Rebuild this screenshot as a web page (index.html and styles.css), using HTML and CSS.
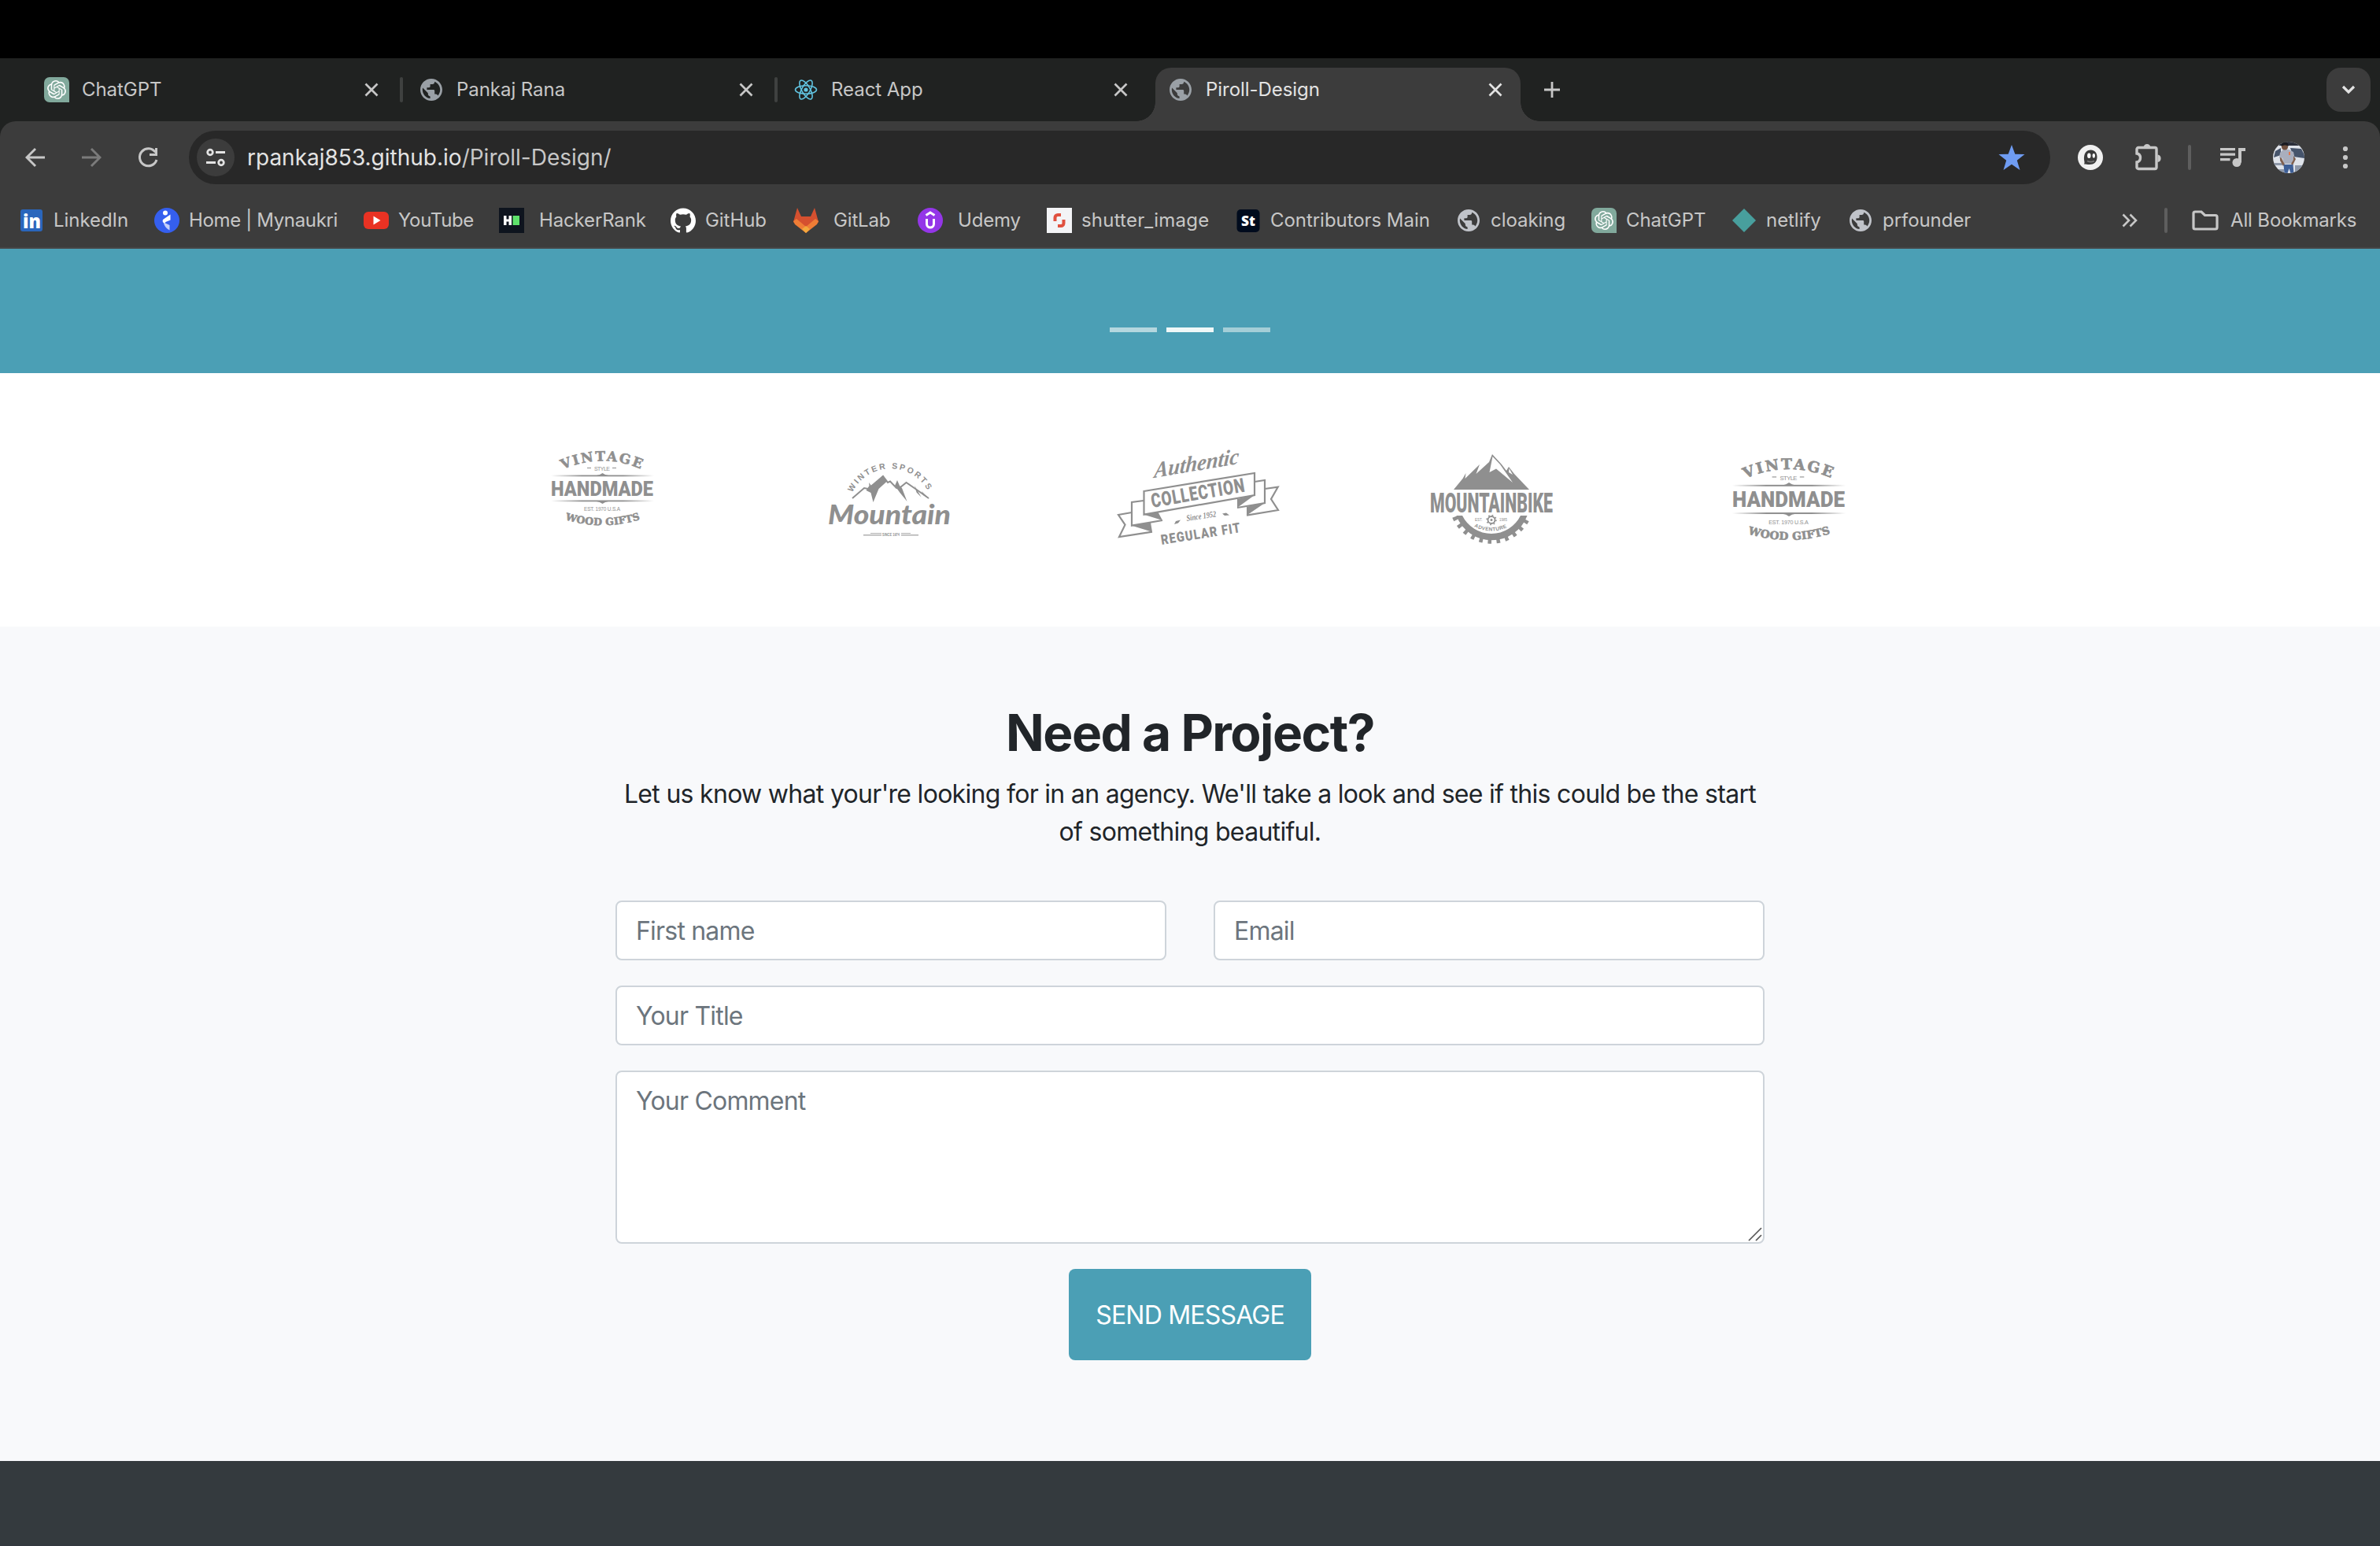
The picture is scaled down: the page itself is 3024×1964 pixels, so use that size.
FILE: index.html
```html
<!DOCTYPE html>
<html lang="en">
<head>
<meta charset="utf-8">
<title>Piroll-Design</title>
<link rel="stylesheet" href="styles.css">
</head>
<body>
<svg class="defs" aria-hidden="true">
  <symbol id="globe" viewBox="2 2 20 20"><path fill="currentColor" d="M12 2C6.480 2 2 6.480 2 12s4.480 10 10 10 10-4.480 10-10S17.520 2 12 2zm-1 17.930c-3.950-.490-7-3.850-7-7.930 0-.620.080-1.210.210-1.790L9 15v1c0 1.100.900 2 2 2v1.930zm6.900-2.540c-.260-.810-1-1.390-1.900-1.390h-1v-3c0-.550-.450-1-1-1H8v-2h2c.550 0 1-.450 1-1V7h2c1.100 0 2-.900 2-2v-.410c2.930 1.190 5 4.060 5 7.410 0 2.080-.800 3.970-2.100 5.390z"/></symbol>
  <symbol id="close" viewBox="0 0 20 20"><path d="M2.500 2.500l15 15M17.500 2.500l-15 15" fill="none" stroke="currentColor" stroke-width="2.700"/></symbol>
  <symbol id="openai" viewBox="0 0 32 32">
    <path fill="#81a99c" d="M7 0h18a7 7 0 0 1 7 7v25H7a7 7 0 0 1-7-7V7a7 7 0 0 1 7-7z"/>
    <path fill="#fff" transform="translate(4 4)" d="M22.2819 9.8211a5.9847 5.9847 0 0 0-.5157-4.9108 6.0462 6.0462 0 0 0-6.5098-2.9A6.0651 6.0651 0 0 0 4.9807 4.1818a5.9847 5.9847 0 0 0-3.9977 2.9 6.0462 6.0462 0 0 0 .7427 7.0966 5.98 5.98 0 0 0 .511 4.9107 6.051 6.051 0 0 0 6.5146 2.9001A5.9847 5.9847 0 0 0 13.2599 24a6.0557 6.0557 0 0 0 5.7718-4.2058 5.9894 5.9894 0 0 0 3.9977-2.9001 6.0557 6.0557 0 0 0-.7475-7.0729zm-9.022 12.6081a4.4755 4.4755 0 0 1-2.8764-1.0408l.1419-.0804 4.7783-2.7582a.7948.7948 0 0 0 .3927-.6813v-6.7369l2.02 1.1686a.071.071 0 0 1 .038.052v5.5826a4.504 4.504 0 0 1-4.4945 4.4944zm-9.6607-4.1254a4.4708 4.4708 0 0 1-.5346-3.0137l.142.0852 4.783 2.7582a.7712.7712 0 0 0 .7806 0l5.8428-3.3685v2.3324a.0804.0804 0 0 1-.0332.0615L9.74 19.9502a4.4992 4.4992 0 0 1-6.1408-1.6464zM2.3408 7.8956a4.485 4.485 0 0 1 2.3655-1.9728V11.6a.7664.7664 0 0 0 .3879.6765l5.8144 3.3543-2.0201 1.1685a.0757.0757 0 0 1-.071 0l-4.8303-2.7865A4.504 4.504 0 0 1 2.3408 7.872zm16.5963 3.8558L13.1038 8.364 15.1192 7.2a.0757.0757 0 0 1 .071 0l4.8303 2.7913a4.4944 4.4944 0 0 1-.6765 8.1042v-5.6772a.79.79 0 0 0-.407-.667zm2.0107-3.0231l-.142-.0852-4.7735-2.7818a.7759.7759 0 0 0-.7854 0L9.409 9.2297V6.8974a.0662.0662 0 0 1 .0284-.0615l4.8303-2.7866a4.4992 4.4992 0 0 1 6.6802 4.66zM8.3065 12.863l-2.02-1.1638a.0804.0804 0 0 1-.038-.0567V6.0742a4.4992 4.4992 0 0 1 7.3757-3.4537l-.142.0805L8.704 5.459a.7948.7948 0 0 0-.3927.6813zm1.0976-2.3654l2.602-1.4998 2.6069 1.4998v2.9994l-2.5974 1.4997-2.6067-1.4997Z"/>
  </symbol>
  <linearGradient id="rule"><stop offset="0" stop-color="#8f8f8f" stop-opacity="0"/><stop offset=".3" stop-color="#8f8f8f"/><stop offset=".7" stop-color="#8f8f8f"/><stop offset="1" stop-color="#8f8f8f" stop-opacity="0"/></linearGradient>
  <path id="arc-vintage" d="M715 596.500A121 121 0 0 1 816 596.500"/>
  <path id="arc-wood" d="M718 660Q765 674.500 813 660"/>
  <symbol id="vintage" viewBox="690 560 150 140" overflow="visible">
    <g fill="#8f8f8f">
      <text class="slab heavy-line" font-size="17" textLength="102" lengthAdjust="spacing"><textPath href="#arc-vintage">VINTAGE</textPath></text>
      <text class="thin" x="755" y="598" font-size="7" textLength="20">STYLE</text>
      <rect x="746" y="594" width="5" height="1"/><rect x="778" y="594" width="5" height="1"/>
      <rect x="700" y="603.500" width="131" height="1.800" fill="url(#rule)"/>
      <rect x="700" y="635.500" width="131" height="1.800" fill="url(#rule)"/>
      <path d="M758 604l4-1 3.500-2 3.500 2 4 1zM758 637l4 1 3.500 2 3.500-2 4-1z"/>
      <text class="heavy" x="700" y="629.500" font-size="25" textLength="130" lengthAdjust="spacingAndGlyphs">HANDMADE</text>
      <text class="thin" x="742" y="649" font-size="6.500" textLength="46">EST. 1970 U.S.A</text>
      <text class="slab heavy-line" font-size="12.500" textLength="97" lengthAdjust="spacing"><textPath href="#arc-wood">WOOD GIFTS</textPath></text>
    </g>
  </symbol>
</svg>

<header class="browser">
  <div class="menubar"></div>
  <nav class="tabs">
    <div class="tab"><span class="slot"><svg width="32" height="32"><use href="#openai"/></svg></span><span class="title">ChatGPT</span><svg class="x" width="20" height="20"><use href="#close"/></svg><i class="sep"></i></div>
    <div class="tab"><span class="slot"><svg class="globe" width="28" height="28"><use href="#globe"/></svg></span><span class="title">Pankaj Rana</span><svg class="x" width="20" height="20"><use href="#close"/></svg><i class="sep"></i></div>
    <div class="tab"><span class="slot"><svg width="30" height="30" viewBox="-15 -15 30 30"><g fill="none" stroke="#61c3e0" stroke-width="1.600"><ellipse rx="13.500" ry="5.200"/><ellipse rx="13.500" ry="5.200" transform="rotate(60)"/><ellipse rx="13.500" ry="5.200" transform="rotate(120)"/></g><circle r="2.600" fill="#61c3e0"/></svg></span><span class="title">React App</span><svg class="x" width="20" height="20"><use href="#close"/></svg></div>
    <div class="tab active"><span class="slot"><svg class="globe" width="28" height="28"><use href="#globe"/></svg></span><span class="title">Piroll-Design</span><svg class="x" width="20" height="20"><use href="#close"/></svg></div>
    <svg class="plus" width="22" height="22" viewBox="0 0 22 22"><path d="M11 1v20M1 11h20" stroke="currentColor" stroke-width="2.800"/></svg>
    <span class="tab-search"><svg width="20" height="14" viewBox="0 0 20 14"><path d="M3 3l7 7 7-7" fill="none" stroke="#e3e3e3" stroke-width="3.200"/></svg></span>
  </nav>

  <div class="toolbar">
    <svg class="back" width="26" height="26" viewBox="0 0 26 26"><path d="M25 13H3M13 2L2 13l11 11" fill="none" stroke="#c7c7c7" stroke-width="2.900"/></svg>
    <svg class="forward" width="26" height="26" viewBox="0 0 26 26"><path d="M1 13h22M13 2l11 11-11 11" fill="none" stroke="#7b7b7b" stroke-width="2.900"/></svg>
    <svg class="reload" width="28" height="28" viewBox="0 0 28 28"><path d="M23.500 7.500A11 11 0 1 0 25 17" fill="none" stroke="#c7c7c7" stroke-width="3"/><path d="M26 2v10H16v-3h7V2z" fill="#c7c7c7"/></svg>
    <div class="omnibox">
      <span class="site-info"><svg width="26" height="24" viewBox="0 0 26 24"><g fill="none" stroke="#e3e3e3" stroke-width="2.800"><circle cx="6" cy="5.500" r="3.300"/><path d="M13 5.500h12M1 18.500h12"/><circle cx="20" cy="18.500" r="3.300"/></g></svg></span>
      <span class="url">rpankaj853.github.io<span class="path">/Piroll-Design/</span></span>
      <svg class="star" width="34" height="32" viewBox="0 0 34 32"><path fill="#6f9cf2" d="M17 0l4.300 11.700L33.500 12l-9.700 7.700L27.500 32 17 24.800 6.500 32l3.700-12.300L.5 12l12.200-.3z"/></svg>
    </div>
    <svg class="ext" width="32" height="32" viewBox="0 0 32 32"><circle cx="16" cy="16" r="16" fill="#f0f0f0"/><path d="M8 24.500c1.500-2.500-.5-4.500 0-9C8.600 9.500 12 6.500 16.500 6.500c5 0 8 3.500 8 9 0 6.500-4 9.500-9.500 9.500-3 0-5-.5-7-.5z" fill="#3a3a3a"/><path d="M12 20.500c3 1.500 6 1.500 9 0" fill="none" stroke="#777" stroke-width="1.500"/><ellipse cx="14.300" cy="13.800" rx="2.200" ry="3.200" fill="#fff"/><ellipse cx="20.300" cy="13.800" rx="1.700" ry="2.900" fill="#fff"/></svg>
    <svg class="puzzle" width="34" height="34" viewBox="0 0 34 34"><path d="M3.500 7.500a2 2 0 0 1 2-2h21a2 2 0 0 1 2 2v23a2 2 0 0 1-2 2h-21a2 2 0 0 1-2-2v-6.500c6-1 6-10 0-11z" transform="translate(-1.500 -1)" fill="none" stroke="#c7c7c7" stroke-width="3.400"/><path d="M10.500 4.500a4.500 4.500 0 0 1 9 0zM28.500 13.500a4.800 4.800 0 0 1 0 9.500z" fill="#c7c7c7"/></svg>
    <i class="divider"></i>
    <svg class="music" width="32" height="26" viewBox="0 0 32 26"><path fill="#c7c7c7" d="M0 1h19v3.200H0zM0 7.500h19v3.200H0zM0 14h12.500v3.200H0zM23 1h9v4h-5v14.500h-4z"/><circle cx="21" cy="19.500" r="5.500" fill="#c7c7c7"/></svg>
    <svg class="avatar" width="40" height="40" viewBox="0 0 40 40"><defs><clipPath id="round"><circle cx="20" cy="20" r="20"/></clipPath></defs><g clip-path="url(#round)"><path fill="#dfe3ea" d="M0 0h40v40H0z"/><path fill="#2b2f3a" d="M8 0h30v5H8z"/><path fill="#46546b" d="M22 8l14 1 4 8v4l-14-2zM3 12l7-4v9l-9 3z"/><path fill="#8d97a8" d="M0 27h12v3H0zM28 30h12v10H28zM0 35h14v5H0z"/><path fill="#a9aebd" d="M9 14l4-4h7l6 3 2 9-3 6H14l-2-8-2 4-2-4z"/><path fill="#80604f" d="M9 20l2 1 4 8-2 2-4-7zM26 18l3 4-4 8-2-2 3-5z"/><circle cx="15" cy="6.500" r="4" fill="#70503f"/><path fill="#191a20" d="M10.500 6c0-8 10-8 9 0-2-2-6-2-9 0z"/><path fill="#e2774d" d="M20 13h2v4h-2z"/><path fill="#3e5f96" d="M13.500 29h12l1 11h-4l-2-6-2 6h-4z"/></g></svg>
    <svg class="dots" width="8" height="30" viewBox="0 0 8 30" fill="#c7c7c7"><circle cx="4" cy="4" r="3.100"/><circle cx="4" cy="15" r="3.100"/><circle cx="4" cy="26" r="3.100"/></svg>
  </div>

  <div class="bookmarks">
    <div class="mark"><svg width="32" height="32"><rect x="2" y="2" width="28" height="28" rx="3" fill="#2a66bc"/><text class="glyph" x="5" y="26" font-size="25" textLength="23" lengthAdjust="spacingAndGlyphs">in</text></svg><span>LinkedIn</span></div>
    <div class="mark tight"><svg width="32" height="32"><circle cx="16" cy="16" r="16" fill="#355fee"/><circle cx="14" cy="6.500" r="3" fill="#fff"/><path d="M11 15l9.500-6.500v7L14.500 18l-1.500 2c-2-1-3-3-2-5z" fill="#fff"/><path d="M12 18.500l7.500 3.500v6.500C15 26 12 22 12 18.500z" fill="#c3d0fb"/></svg><span>Home | Mynaukri</span></div>
    <div class="mark tight"><svg width="32" height="32"><rect y="5" width="32" height="22" rx="6" fill="#e93223"/><path d="M12.500 10.500l9 5.500-9 5.500z" fill="#fff"/></svg><span>YouTube</span></div>
    <div class="mark wide"><svg width="32" height="32"><path fill="#0e141e" d="M0 0h32v32H0z"/><path fill="#fff" d="M6 10h3.500v4.500h3V10H16v12h-3.500v-4.500h-3V22H6z"/><path fill="#5ee26b" d="M17.500 10H26v12h-8.500z"/></svg><span>HackerRank</span></div>
    <div class="mark"><svg width="32" height="32" viewBox="0 0 24 24"><path fill="#fff" d="M12 .297c-6.63 0-12 5.373-12 12 0 5.303 3.438 9.800 8.205 11.385.6.113.82-.258.82-.577 0-.285-.01-1.04-.015-2.04-3.338.724-4.042-1.61-4.042-1.61C4.422 18.070 3.633 17.700 3.633 17.700c-1.087-.744.084-.729.084-.729 1.205.084 1.838 1.236 1.838 1.236 1.070 1.835 2.809 1.305 3.495.998.108-.776.417-1.305.76-1.605-2.665-.3-5.466-1.332-5.466-5.930 0-1.310.465-2.380 1.235-3.220-.135-.303-.54-1.523.105-3.176 0 0 1.005-.322 3.300 1.230.96-.267 1.980-.399 3-.405 1.020.006 2.040.138 3 .405 2.280-1.552 3.285-1.230 3.285-1.230.645 1.653.24 2.873.12 3.176.765.840 1.230 1.910 1.230 3.220 0 4.610-2.805 5.625-5.475 5.920.42.360.81 1.096.81 2.220 0 1.606-.015 2.896-.015 3.286 0 .315.21.690.825.570C20.565 22.092 24 17.592 24 12.297c0-6.627-5.373-12-12-12"/></svg><span>GitHub</span></div>
    <div class="mark wide"><svg width="32" height="32"><path fill="#d5502f" d="M5 0l5 11h12l5-11 5 18-16 13.500L0 18z"/><path fill="#ef7d36" d="M0 17l4-3 12 10 12-10 4 3-2 4-14 11L2 21z"/><path fill="#f2a83d" d="M16 23l5 4-5 5-5-5z"/></svg><span>GitLab</span></div>
    <div class="mark wide"><svg width="32" height="32"><circle cx="16" cy="16" r="16" fill="#9436e8"/><path d="M10.500 9.500L16 6l5.500 3.500M11.500 14v6.500c0 6 9 6 9 0V14" fill="none" stroke="#fff" stroke-width="3"/></svg><span>Udemy</span></div>
    <div class="mark loose"><svg width="32" height="32"><path fill="#f3f4f6" d="M0 0h32v32H0z"/><path d="M10.500 17v-4.500c0-2 1.500-3.500 3.500-3.500h4M21.500 15v4.500c0 2-1.500 3.500-3.500 3.500h-4" fill="none" stroke="#e0513f" stroke-width="4"/></svg><span>shutter_image</span></div>
    <div class="mark"><svg width="32" height="32"><rect x="1.500" y="2" width="29" height="29" rx="5" fill="#000b1d"/><text class="glyph" x="7" y="22.500" font-size="18" textLength="18" lengthAdjust="spacingAndGlyphs">St</text></svg><span>Contributors Main</span></div>
    <div class="mark"><svg class="light" width="32" height="32"><use href="#globe" x="2" y="2" width="28" height="28"/></svg><span>cloaking</span></div>
    <div class="mark"><svg width="32" height="32"><use href="#openai"/></svg><span>ChatGPT</span></div>
    <div class="mark"><svg width="32" height="32"><path fill="#489f9d" d="M16 1l15 15-15 15L1 16z"/></svg><span>netlify</span></div>
    <div class="mark"><svg class="light" width="32" height="32"><use href="#globe" x="2" y="2" width="28" height="28"/></svg><span>prfounder</span></div>
    <svg class="more" width="20" height="18" viewBox="0 0 20 18"><path d="M1.500 1.500L9 9l-7.500 7.500M10.500 1.500L18 9l-7.500 7.500" fill="none" stroke="#c7c7c7" stroke-width="2.600"/></svg>
    <i class="divider"></i>
    <div class="mark all"><svg width="34" height="26" viewBox="0 0 34 26"><path d="M2 4a2 2 0 0 1 2-2h8l4.500 4.500H30a2 2 0 0 1 2 2V22a2 2 0 0 1-2 2H4a2 2 0 0 1-2-2z" fill="none" stroke="#c7c7c7" stroke-width="3.200"/></svg><span>All Bookmarks</span></div>
  </div>
</header>

<main>
  <section class="carousel"><i></i><i class="current"></i><i></i></section>

  <section class="brands">
    <svg class="b1" width="150" height="140"><use href="#vintage"/></svg>
    <svg class="b2" width="180" height="140" viewBox="1040 560 180 140" fill="#8f8f8f">
      <path id="arc-winter" fill="none" d="M1083 625.500A54 54 0 0 1 1180 625.500"/>
      <text class="sans-bold" font-size="10.500" textLength="117" lengthAdjust="spacing"><textPath href="#arc-winter">WINTER SPORTS</textPath></text>
      <path d="M1083 633l15-13 5 1 19-16 6 8 3-1.500 8 8.500 5-1 7.500-6 14.500 10 14 10" fill="none" stroke="#8f8f8f" stroke-width="2"/>
      <path d="M1121.500 604l6 7-11 10-7 17-3-12-6-3 4-6-.5-4 3 4 5-3zM1137 617l3-7 3 7 3 3 6.500 17-9-11zM1162 617l8.500 14.500-6-6zM1171 624l10 10-8-5z"/>
      <text class="script-bold" x="1052" y="666" font-size="35" textLength="156" lengthAdjust="spacingAndGlyphs">Mountain</text>
      <path d="M1097 679h23v1.500h-23zM1106 677h14v1h-14zM1145 679h22v1.500h-22zM1145 677h12v1h-12z" opacity=".7"/>
      <text class="sans-bold" x="1121" y="681" font-size="5.500" textLength="22" lengthAdjust="spacingAndGlyphs">SINCE 1974</text>
    </svg>
    <svg class="b3" width="225" height="140" viewBox="1410 560 225 140" fill="#8f8f8f">
      <text class="brush" transform="translate(1466 607) rotate(-9.500) skewX(-14)" font-size="28" textLength="109" lengthAdjust="spacingAndGlyphs">Authentic</text>
      <g fill="none" stroke="#8f8f8f" stroke-width="2.200"><path d="M1453.500 624L1594 601v28l-140.500 24.700z"/><path d="M1453 636l-15 2v29.700l39-6.700M1438 651l-17 3 8.500 12.700-7.500 15.300 42-6.300M1594 612l13-2v29l-35 6M1607 621l16.700-2.300L1615 634l9 14-40 6.700"/></g>
      <path d="M1453.500 653.700l18-3 5.500 10.300zM1438 667.700l24-4 2 12zM1572 645v-11l22-5zM1584 654.700v-11l23-4.700z"/>
      <text class="cond" transform="translate(1464 645) rotate(-9.800) scale(.76 1)" font-size="25" textLength="158" lengthAdjust="spacing">COLLECTION</text>
      <text class="brush" transform="translate(1508 662) rotate(-8.500)" font-size="11" textLength="38" lengthAdjust="spacingAndGlyphs">Since 1952</text>
      <path d="M1492 666l2-4 6-1.500-3 4zM1553 652.500l5-1 4 3-6 .5z"/>
      <text class="cond" transform="translate(1476 692) rotate(-9) scale(.84 1)" font-size="17.500" textLength="121" lengthAdjust="spacing">REGULAR FIT</text>
    </svg>
    <svg class="b4" width="170" height="140" viewBox="1810 560 170 140" fill="#8f8f8f">
      <path d="M1847 622L1858.500 608 1862.500 601 1861.500 608 1880 590 1875.500 602 1892 587 1896 577 1908 590 1914 598 1917 593 1924 602 1943 622z"/>
      <path d="M1896.500 580L1892.500 600 1901 595.500 1922 613 1913 600 1906 590zM1917.500 595L1917 600 1922 603z" fill="#fff"/>
      <text class="cond" x="1817" y="651" font-size="35" textLength="156" lengthAdjust="spacingAndGlyphs">MOUNTAINBIKE</text>
      <path d="M1850.500 655h7.500a41.300 41.300 0 0 0 74 0h8.500a48 48 0 0 1-90 0z"/>
      <path fill="none" stroke="#8f8f8f" stroke-width="7" stroke-dasharray="4.500 6.400" d="M1848.500 656.500a50.500 50.500 0 0 0 93 0"/>
      <circle cx="1895" cy="660.500" r="4.500" fill="none" stroke="#8f8f8f" stroke-width="1.800"/><circle cx="1895" cy="660.500" r="6" fill="none" stroke="#8f8f8f" stroke-width="1.500" stroke-dasharray="1.700 3"/><circle cx="1895" cy="660.500" r="1.500"/>
      <text class="thin" x="1874" y="661.500" font-size="4.500">EST.</text><text class="thin" x="1905" y="661.500" font-size="4.500">1985</text>
      <path id="arc-adv" fill="none" d="M1873 669q22 11 44 0"/>
      <text class="sans-bold" font-size="6.500" textLength="43" lengthAdjust="spacing"><textPath href="#arc-adv">ADVENTURE</textPath></text>
    </svg>
    <svg class="b5" width="165" height="154"><use href="#vintage"/></svg>
  </section>

  <section class="contact">
    <h2>Need a Project?</h2>
    <p>Let us know what your're looking for in an agency. We'll take a look and see if this could be the start<br>of something beautiful.</p>
    <form>
      <div class="row"><input type="text" placeholder="First name"><input type="text" placeholder="Email"></div>
      <input type="text" placeholder="Your Title">
      <div class="area"><textarea placeholder="Your Comment"></textarea><svg class="grip" width="18" height="18" viewBox="0 0 18 18"><path d="M1 17L17 1M10 17l7-7" stroke="#555" stroke-width="1.700"/></svg></div>
      <button type="button">SEND MESSAGE</button>
    </form>
  </section>
</main>
<footer></footer>
</body>
</html>
```
FILE: styles.css
```css
* { box-sizing: border-box; }
body {
  margin: 0;
  width: 3024px;
  height: 1964px;
  overflow: hidden;
  display: flex;
  flex-direction: column;
  font-family: "Inter", sans-serif;
  background: #fff;
}
svg { display: block; flex: none; }
i { display: block; flex: none; }
.defs { position: absolute; width: 0; height: 0; }

/* browser window */
.menubar { height: 74px; background: #000; }
.tabs {
  height: 80px;
  background: #202221;
  display: flex;
  align-items: stretch;
  padding: 12px 12px 0 36px;
  color: #c7c7c7;
}
.tab {
  width: 476px;
  height: 56px;
  display: flex;
  align-items: center;
  padding-left: 20px;
}
.slot { width: 32px; display: flex; justify-content: center; flex: none; }
.title { flex: 1; margin-left: 16px; padding-bottom: 2px; font-size: 24px; letter-spacing: -0.05px; white-space: nowrap; }
.tab .x { margin-right: 30px; }
.tab:has(.sep) .x { margin-right: 26px; }
.sep { width: 4px; height: 32px; border-radius: 2px; background: #3f4140; }
.globe { color: #9aa0a6; }
.light { color: #c0c3c9; }
.tab.active {
  position: relative;
  height: 68px;
  width: 464px;
  margin-left: 4px;
  padding: 0 0 12px 16px;
  background: #3c3c3c;
  border-radius: 20px 20px 0 0;
  color: #e3e3e3;
}
.tab.active .x { margin-right: 22px; }
.tab.active::before, .tab.active::after {
  content: "";
  position: absolute;
  bottom: 0;
  width: 24px;
  height: 24px;
}
.tab.active::before { left: -24px; background: radial-gradient(circle at 0 0, #202221 23.5px, #3c3c3c 24px); }
.tab.active::after { right: -24px; background: radial-gradient(circle at 100% 0, #202221 23.5px, #3c3c3c 24px); }
.plus { margin: 17px 0 0 29px; }
.tab-search {
  margin-left: auto;
  width: 56px;
  height: 56px;
  border-radius: 18px;
  background: #3c3c3c;
  display: flex;
  align-items: center;
  justify-content: center;
}
.browser { background: #202221; }
.toolbar {
  height: 92px;
  background: #3c3c3c;
  border-radius: 20px 20px 0 0;
  display: flex;
  align-items: center;
  padding-left: 32px;
}
.forward { margin-left: 45px; }
.reload { margin-left: 45px; }
.omnibox {
  width: 2365px;
  height: 68px;
  margin-left: 38px;
  border-radius: 34px;
  background: #282828;
  display: flex;
  align-items: center;
  padding-left: 10px;
}
.site-info {
  width: 48px;
  height: 48px;
  border-radius: 50%;
  background: #3c3c3c;
  display: flex;
  align-items: center;
  justify-content: center;
}
.url { margin-left: 16px; font-size: 28px; color: #e3e3e3; white-space: nowrap; }
.path { color: #c7c7c7; }
.star { margin: 0 32px 0 auto; }
.ext { margin-left: 35px; }
.puzzle { margin-left: 41px; }
.divider { width: 4px; height: 32px; border-radius: 2px; background: #5e5e5e; }
.toolbar .divider { margin-left: 33px; }
.music { margin-left: 37px; }
.avatar { margin-left: 35px; }
.dots { margin-left: 48px; }

.bookmarks {
  height: 70px;
  background: #3c3c3c;
  border-bottom: 2px solid #464646;
  display: grid;
  grid-template-columns: 172px 266px 172px 218px 156px 158px 164px 240px 280px 172px 178px 148px 348px 54px 35px 1fr;
  align-items: center;
  padding-left: 24px;
  font-size: 24px;
  letter-spacing: -0.05px;
  color: #c7c7c7;
}
.mark { display: flex; align-items: center; gap: 12px; white-space: nowrap; }
.mark span { padding-bottom: 2px; }
.mark.wide { gap: 19px; letter-spacing: -0.15px; }
.mark.tight { letter-spacing: -0.35px; }
.mark.loose { letter-spacing: 0.2px; }
.mark.all { gap: 15px; letter-spacing: -0.15px; }
.glyph { font-family: "Open Sans", sans-serif; font-weight: 800; fill: #fff; letter-spacing: 0; }

/* page */
.carousel {
  height: 158px;
  background: #4b9fb5;
  display: flex;
  justify-content: center;
  gap: 12px;
  padding-top: 100px;
}
.carousel i { width: 60px; height: 6px; background: #a4ced7; }
.carousel i:first-child { background: #b4d7df; }
.carousel .current { background: #f0f8f8; }

.brands {
  height: 322px;
  padding: 86px 0 0 690px;
  display: flex;
  align-items: flex-start;
}
.brands svg { overflow: visible; }
.b2 { margin-left: 200px; }
.b3 { margin-left: 190px; }
.b4 { margin-left: 175px; }
.b5 { margin: 8px 0 0 210px; }
.slab { font-family: "DejaVu Serif", serif; font-weight: 700; }
.heavy-line { stroke: #8f8f8f; stroke-width: 0.6px; }
.heavy { font-family: "Roboto", sans-serif; font-weight: 900; }
.thin { font-family: "Liberation Sans", sans-serif; }
.sans-bold { font-family: "Liberation Sans", sans-serif; font-weight: 700; }
.cond { font-family: "Roboto", sans-serif; font-weight: 900; }
.script-bold { font-family: "Lato", sans-serif; font-weight: 900; font-style: italic; }
.brush { font-family: "Liberation Serif", serif; font-style: italic; font-weight: 700; }

.contact {
  height: 1060px;
  background: #f8f9fb;
  color: #212529;
  display: flex;
  flex-direction: column;
  align-items: center;
  padding-top: 96px;
}
h2 { margin: 0; font-size: 64px; line-height: 77px; font-weight: 700; letter-spacing: -1.5px; white-space: nowrap; }
p { margin: 16px 0 0; font-size: 32px; line-height: 48px; letter-spacing: -0.7px; text-align: center; white-space: nowrap; }
form {
  width: 1460px;
  margin-top: 63px;
  display: flex;
  flex-direction: column;
  align-items: center;
  gap: 32px;
}
.row { width: 100%; display: grid; grid-template-columns: 1fr 1fr; gap: 60px; }
input, textarea {
  width: 100%;
  height: 76px;
  padding: 0 24px;
  border: 2px solid #ced4da;
  border-radius: 8px;
  background: #fff;
  font: 32px/48px "Inter", sans-serif;
  letter-spacing: -0.8px;
}
input::placeholder, textarea::placeholder { color: #6c757d; opacity: 1; }
.area { position: relative; width: 100%; height: 220px; }
textarea { display: block; height: 220px; padding-top: 13px; resize: none; }
.grip { position: absolute; right: 3px; bottom: 3px; }
button {
  width: 308px;
  height: 116px;
  border: 0;
  border-radius: 8px;
  background: #4b9fb5;
  color: #fff;
  font: 32px/48px "Inter", sans-serif;
  letter-spacing: -0.8px;
  white-space: nowrap;
  padding: 2px 0 0;
}
footer { flex: 1; background: #343a3e; border-bottom: 2px solid #33383f; }
```
